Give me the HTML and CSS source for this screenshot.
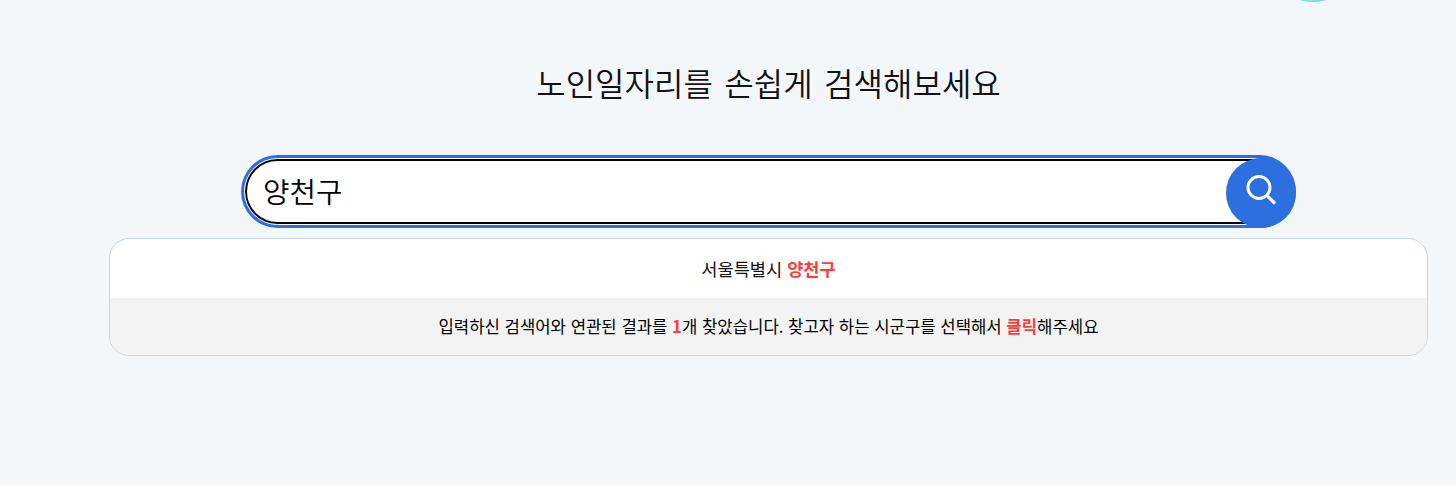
FILE: index.html
```html
<!DOCTYPE html>
<html lang="ko">
<head>
    <meta charset="UTF-8">
    <meta name="viewport" content="width=device-width, initial-scale=1.0">
    <title>노인일자리 검색</title>
    <link rel="stylesheet" href="styles.css">
</head>
<body>
    <div class="top-deco"></div>
    <div class="container">
        <h1 class="title">노인일자리를 손쉽게 검색해보세요</h1>
        <form class="search-box">
            <input type="text" class="search-input" value="양천구">
            <button type="button" class="search-btn" aria-label="검색">
                <svg width="30" height="30" viewBox="0 0 30 30" fill="none" stroke="#fff" stroke-linecap="round">
                    <circle cx="13" cy="12.5" r="11" stroke-width="3"/>
                    <path d="M22.5 22L28 27.5" stroke-width="3.2"/>
                </svg>
            </button>
        </form>
        <div class="result-panel">
            <div class="result-row">서울특별시 <b class="hl">양천구</b></div>
            <div class="result-info">입력하신 검색어와 연관된 결과를 <b class="hl">1</b>개 찾았습니다. 찾고자 하는 시군구를 선택해서 <b class="hl">클릭</b>해주세요</div>
        </div>
    </div>
</body>
</html>
```

FILE: styles.css
```css
body {
    font-family: "Noto Sans CJK KR", "Noto Sans", sans-serif;
    background-color: #f3f7fa;
    margin: 0;
    height: 485px;
    overflow: hidden;
    color: #000;
}
.top-deco {
    position: absolute;
    left: 1288px;
    top: -22px;
    width: 50px;
    height: 24px;
    border-radius: 50%;
    background-color: #80e2d2;
}
.container {
    display: flex;
    flex-direction: column;
    align-items: center;
    padding: 62px 28px 0 109px;
}
.title {
    margin: 0 0 48px;
    height: 45px;
    line-height: 40px;
    font-size: 32px;
    font-weight: 350;
    word-spacing: 2.5px;
    color: #111;
}
.search-box {
    position: relative;
    width: 1055px;
    height: 73px;
    box-sizing: border-box;
    padding: 4px;
    margin-bottom: 10px;
    border: 0;
    border-radius: 37px;
    background-color: #2d6fdf;
}
.search-input {
    display: block;
    width: 1040px;
    height: 65px;
    box-sizing: border-box;
    padding: 0 16px 2px;
    border: 2px solid #000;
    outline: 1px solid #fff;
    border-radius: 33px;
    background-color: #fff;
    font-family: inherit;
    font-size: 28.8px;
    font-weight: 350;
    color: #000;
}
.search-btn {
    position: absolute;
    right: 0;
    bottom: 0;
    display: flex;
    align-items: center;
    justify-content: center;
    width: 70px;
    height: 70px;
    padding: 0 0 6px;
    border: none;
    border-radius: 50%;
    background-color: #2d6fdf;
    cursor: pointer;
}
.result-panel {
    width: 100%;
    box-sizing: border-box;
    border: 1px solid #c5d5e8;
    border-radius: 20px;
    background-color: #fff;
    overflow: hidden;
    text-align: center;
}
.result-row {
    height: 59px;
    line-height: 60px;
    font-size: 17.6px;
    color: #111;
}
.result-info {
    height: 57px;
    line-height: 57px;
    font-size: 16.7px;
    background-color: #f3f3f3;
}
.hl {
    color: #ff3b3b;
    font-weight: 700;
}
```
